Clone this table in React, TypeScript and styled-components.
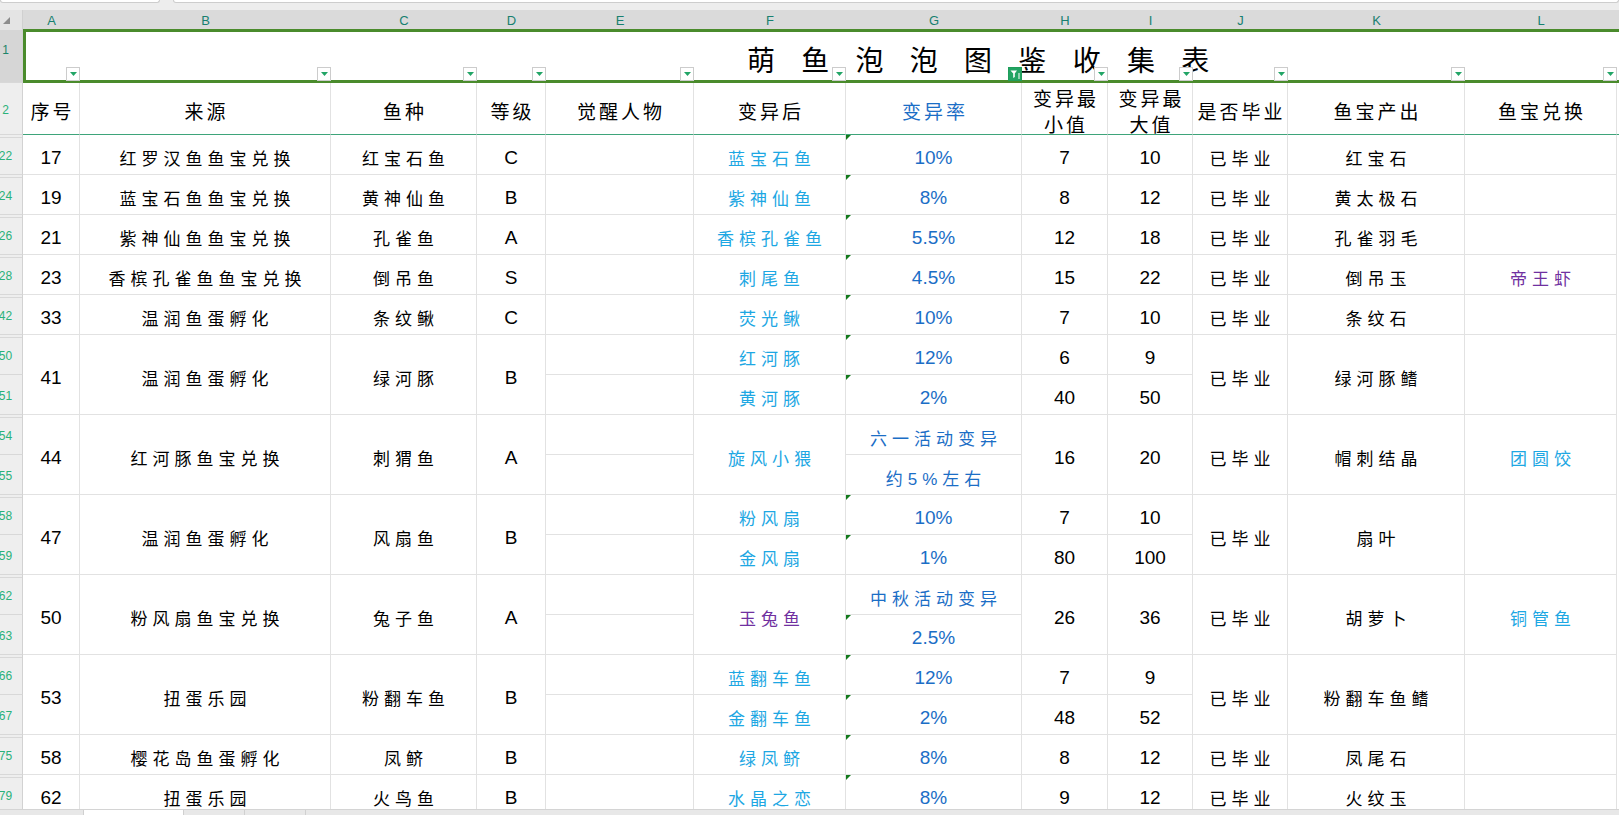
import React from 'react';
import styled, { createGlobalStyle, css } from 'styled-components';

const GlobalStyle = createGlobalStyle`
  html, body { margin: 0; padding: 0; background: #ffffff; }
  body { overflow: hidden; font-family: "Liberation Sans", "Noto Sans CJK SC", sans-serif; }
  #root { width: 1619px; height: 815px; }
`;

type Tone = 'black' | 'cyan' | 'blue' | 'purple';
const TONES: Record<Tone, string> = {
  black: '#000000',
  cyan: '#1da7e3',
  blue: '#1b6ec6',
  purple: '#7030a0',
};

const COL_TONE: Tone[] = ['black', 'black', 'black', 'black', 'black', 'cyan', 'blue', 'black', 'black', 'black', 'black', 'cyan'];
const LETTERS = ['A', 'B', 'C', 'D', 'E', 'F', 'G', 'H', 'I', 'J', 'K', 'L', ''];
const HEADERS: { t: string; tone: Tone }[] = [
  { t: '序号', tone: 'black' },
  { t: '来源', tone: 'black' },
  { t: '鱼种', tone: 'black' },
  { t: '等级', tone: 'black' },
  { t: '觉醒人物', tone: 'black' },
  { t: '变异后', tone: 'black' },
  { t: '变异率', tone: 'blue' },
  { t: '变异最\n小值', tone: 'black' },
  { t: '变异最\n大值', tone: 'black' },
  { t: '是否毕业', tone: 'black' },
  { t: '鱼宝产出', tone: 'black' },
  { t: '鱼宝兑换', tone: 'black' },
];

type V = string | { t: string; tone: Tone };
type Field = V | [V, V];
interface Rec { labels: number[]; cells: Field[] }
const P = (t: string): V => ({ t, tone: 'purple' });

const RECORDS: Rec[] = [
  { labels: [22], cells: ['17', '红罗汉鱼鱼宝兑换', '红宝石鱼', 'C', '', '蓝宝石鱼', '10%', '7', '10', '已毕业', '红宝石', ''] },
  { labels: [24], cells: ['19', '蓝宝石鱼鱼宝兑换', '黄神仙鱼', 'B', '', '紫神仙鱼', '8%', '8', '12', '已毕业', '黄太极石', ''] },
  { labels: [26], cells: ['21', '紫神仙鱼鱼宝兑换', '孔雀鱼', 'A', '', '香槟孔雀鱼', '5.5%', '12', '18', '已毕业', '孔雀羽毛', ''] },
  { labels: [28], cells: ['23', '香槟孔雀鱼鱼宝兑换', '倒吊鱼', 'S', '', '刺尾鱼', '4.5%', '15', '22', '已毕业', '倒吊玉', P('帝王虾')] },
  { labels: [42], cells: ['33', '温润鱼蛋孵化', '条纹鳅', 'C', '', '荧光鳅', '10%', '7', '10', '已毕业', '条纹石', ''] },
  { labels: [50, 51], cells: ['41', '温润鱼蛋孵化', '绿河豚', 'B', ['', ''], ['红河豚', '黄河豚'], ['12%', '2%'], ['6', '40'], ['9', '50'], '已毕业', '绿河豚鳍', ''] },
  { labels: [54, 55], cells: ['44', '红河豚鱼宝兑换', '刺猬鱼', 'A', ['', ''], '旋风小猥', ['六一活动变异', '约5%左右'], '16', '20', '已毕业', '帽刺结晶', '团圆饺'] },
  { labels: [58, 59], cells: ['47', '温润鱼蛋孵化', '风扇鱼', 'B', ['', ''], ['粉风扇', '金风扇'], ['10%', '1%'], ['7', '80'], ['10', '100'], '已毕业', '扇叶', ''] },
  { labels: [62, 63], cells: ['50', '粉风扇鱼宝兑换', '兔子鱼', 'A', ['', ''], P('玉兔鱼'), ['中秋活动变异', '2.5%'], '26', '36', '已毕业', '胡萝卜', '铜管鱼'] },
  { labels: [66, 67], cells: ['53', '扭蛋乐园', '粉翻车鱼', 'B', ['', ''], ['蓝翻车鱼', '金翻车鱼'], ['12%', '2%'], ['7', '48'], ['9', '52'], '已毕业', '粉翻车鱼鳍', ''] },
  { labels: [75], cells: ['58', '樱花岛鱼蛋孵化', '凤鲚', 'B', '', '绿凤鲚', '8%', '8', '12', '已毕业', '凤尾石', ''] },
  { labels: [79], cells: ['62', '扭蛋乐园', '火鸟鱼', 'B', '', '水晶之恋', '8%', '9', '12', '已毕业', '火纹玉', ''] },
];

const CJK = /[\u3400-\u9fff]/;

const Page = styled.div`
  width: 1619px;
  height: 815px;
  display: flex;
  flex-direction: column;
  overflow: hidden;
  background: #ffffff;
`;

const TopStrip = styled.div`
  flex: 0 0 10px;
  display: flex;
  gap: 13px;
  align-items: flex-start;
  background: #ededed;
`;

const FieldEdge = styled.div<{ $grow?: boolean }>`
  height: 3px;
  box-sizing: border-box;
  background: #ffffff;
  border: 1px solid #cdcdcd;
  border-top: none;
  border-radius: 0 0 5px 5px;
  ${p => (p.$grow ? css`flex: 1;` : css`flex: 0 0 160px;`)}
`;

const Sheet = styled.div`
  flex: 1;
  min-height: 0;
  overflow: hidden;
  display: grid;
  grid-template-columns: 23px 57px 251px 146px 69px 148px 152px 176px 86px 85px 95px 177px 152px minmax(0, 1fr);
  grid-template-rows: 20px 53px 52px repeat(17, 40px);
  align-content: start;
`;

const Corner = styled.div`
  grid-row: 1;
  grid-column: 1;
  background: #e4e4e4;
  border-right: 1px solid #d0d0d0;
  display: flex;
  align-items: center;
  padding-left: 3px;
`;

const ColHead = styled.div<{ $col: number }>`
  grid-row: 1;
  grid-column: ${p => p.$col};
  background: #dadada;
  color: #17806f;
  font: 13px "Liberation Sans", sans-serif;
  display: flex;
  align-items: center;
  justify-content: center;
`;

const RowHead = styled.div<{ $row: number; $gap?: boolean; $sel?: boolean }>`
  grid-column: 1;
  grid-row: ${p => p.$row};
  background: ${p => (p.$sel ? '#d6d6d6' : '#eeeeee')};
  border-right: 1px solid #d2d2d2;
  border-bottom: 1px solid #d8d8d8;
  color: ${p => (p.$sel ? '#1c846a' : '#2ab27a')};
  font: 12px "Liberation Sans", sans-serif;
  display: flex;
  align-items: center;
  justify-content: center;
  padding-right: 11px;
  padding-top: ${p => (p.$sel ? '0' : '2px')};
  padding-bottom: ${p => (p.$sel ? '12px' : '0')};
  overflow: hidden;
  ${p => p.$gap && css`box-shadow: inset 0 2px 0 #eeeeee, inset 0 3px 0 #d8d8d8;`}
`;

const FilterSlot = styled.div<{ $col: number }>`
  grid-row: 2;
  grid-column: ${p => p.$col};
  display: flex;
  align-items: flex-end;
  justify-content: flex-end;
  padding-bottom: 2px;
  z-index: 3;
`;

const FilterBtn = styled.div<{ $active?: boolean }>`
  width: 14px;
  height: 14px;
  box-sizing: border-box;
  border: 1px solid ${p => (p.$active ? '#1f9d5a' : '#cccccc')};
  background: ${p => (p.$active ? '#22a463' : '#ffffff')};
  display: flex;
  align-items: center;
  justify-content: center;
`;

const Title = styled.div`
  grid-row: 2;
  grid-column: 2 / -1;
  display: flex;
  align-items: center;
  padding-left: 724px;
  padding-top: 5px;
  font: 28px "Noto Sans CJK SC", sans-serif;
  letter-spacing: 10px;
  white-space: pre;
  color: #000000;
`;

const RowSelection = styled.div`
  grid-row: 2;
  grid-column: 2 / -1;
  border: 3px solid #4a8b2c;
  border-right: none;
  margin-top: -1px;
  pointer-events: none;
  z-index: 2;
`;

const HeadCell = styled.div<{ $col: number; $tone: Tone }>`
  grid-row: 3;
  grid-column: ${p => p.$col};
  display: flex;
  align-items: center;
  justify-content: center;
  text-align: center;
  padding-top: 4px;
  border-right: 1px solid #e2e2e2;
  border-bottom: 1px solid #3ea47a;
  color: ${p => TONES[p.$tone]};
  font: 19px/26px "Noto Sans CJK SC", sans-serif;
  letter-spacing: 3px;
  white-space: pre-line;
`;

const HeadText = styled.div`
  padding-left: 3px;
`;

const Filler = styled.div<{ $row: number }>`
  grid-row: ${p => p.$row};
  grid-column: 14;
  border-bottom: 1px solid #3ea47a;
`;

const Cell = styled.div<{ $row: number; $col: number; $span: number; $tone: Tone; $mark: boolean }>`
  grid-row: ${p => `${p.$row} / span ${p.$span}`};
  grid-column: ${p => p.$col};
  position: relative;
  display: flex;
  align-items: center;
  justify-content: center;
  padding-top: 6px;
  border-right: 1px solid #e2e2e2;
  border-bottom: 1px solid #e2e2e2;
  color: ${p => TONES[p.$tone]};
  white-space: nowrap;
  min-width: 0;
  ${p =>
    p.$mark &&
    css`
      &::before {
        content: '';
        position: absolute;
        left: 0;
        top: 0;
        border-style: solid;
        border-width: 5px 5px 0 0;
        border-color: #137a1c transparent transparent transparent;
      }
    `}
`;

const CellText = styled.span<{ $cjk: boolean }>`
  font-family: "Liberation Sans", "Noto Sans CJK SC", sans-serif;
  font-size: ${p => (p.$cjk ? '17px' : '19px')};
  letter-spacing: ${p => (p.$cjk ? '5px' : '0')};
  padding-left: ${p => (p.$cjk ? '5px' : '0')};
`;

const SheetBar = styled.div`
  flex: 0 0 6px;
  display: flex;
  box-sizing: border-box;
  background: #e8e8e8;
  border-top: 1px solid #d4d4d4;
`;

const BarPart = styled.div<{ $w: number; $active?: boolean }>`
  flex: 0 0 ${p => p.$w}px;
  background: ${p => (p.$active ? '#ffffff' : 'transparent')};
  border-right: 1px solid #d0d0d0;
`;

const Caret = () => (
  <svg width="7" height="4" viewBox="0 0 7 4">
    <path d="M0 0h7L3.5 4z" fill="#22a566" />
  </svg>
);

const Funnel = () => (
  <svg width="12" height="12" viewBox="0 0 12 12">
    <path d="M1.5 2.5h6.5L5.8 5.6v3.4L4.2 10V5.6z" fill="#ffffff" />
    <path d="M9 6h2M9 8h2M9 10h2" stroke="#ffffff" strokeWidth="1" />
  </svg>
);

const CornerMark = () => (
  <svg width="7" height="7" viewBox="0 0 7 7">
    <path d="M7 0V7H0z" fill="#8c8c8c" />
  </svg>
);

export default function App() {
  const rowHeads: React.ReactNode[] = [];
  const cells: React.ReactNode[] = [];
  let gridRow = 4;
  let prev = 2;

  RECORDS.forEach((rec, ri) => {
    const span = rec.labels.length;
    rec.labels.forEach((lab, i) => {
      rowHeads.push(
        <RowHead key={`rh${lab}`} $row={gridRow + i} $gap={lab !== prev + 1}>
          {lab}
        </RowHead>
      );
      prev = lab;
    });
    rec.cells.forEach((f, ci) => {
      const col = ci + 2;
      const parts: { v: V; row: number; span: number }[] = Array.isArray(f)
        ? f.map((v, k) => ({ v, row: gridRow + k, span: 1 }))
        : [{ v: f, row: gridRow, span }];
      parts.forEach(({ v, row, span: sp }) => {
        const t = typeof v === 'string' ? v : v.t;
        const tone = typeof v === 'string' ? COL_TONE[ci] : v.tone;
        const cjk = CJK.test(t);
        const mark = ci === 6 && t !== '' && !cjk;
        cells.push(
          <Cell key={`c${ri}-${ci}-${row}`} $row={row} $col={col} $span={sp} $tone={tone} $mark={mark}>
            {t && <CellText $cjk={cjk}>{t}</CellText>}
          </Cell>
        );
      });
    });
    gridRow += span;
  });

  return (
    <>
      <GlobalStyle />
      <Page>
        <TopStrip>
          <FieldEdge />
          <FieldEdge $grow />
        </TopStrip>
        <Sheet>
          <Corner>
            <CornerMark />
          </Corner>
          {LETTERS.map((l, i) => (
            <ColHead key={`ch${i}`} $col={i + 2}>
              {l}
            </ColHead>
          ))}

          <RowHead $row={2} $sel>
            1
          </RowHead>
          <Title>萌 鱼 泡 泡 图 鉴 收 集 表</Title>
          {LETTERS.slice(0, 12).map((_, i) => (
            <FilterSlot key={`f${i}`} $col={i + 2}>
              <FilterBtn $active={i === 6}>{i === 6 ? <Funnel /> : <Caret />}</FilterBtn>
            </FilterSlot>
          ))}
          <RowSelection />

          <RowHead $row={3}>2</RowHead>
          {HEADERS.map((h, i) => (
            <HeadCell key={`h${i}`} $col={i + 2} $tone={h.tone}>
              <HeadText>{h.t}</HeadText>
            </HeadCell>
          ))}
          <Filler $row={3} />

          {rowHeads}
          {cells}
        </Sheet>
        <SheetBar>
          <BarPart $w={83} />
          <BarPart $w={99} $active />
          <BarPart $w={60} />
          <BarPart $w={60} />
        </SheetBar>
      </Page>
    </>
  );
}
